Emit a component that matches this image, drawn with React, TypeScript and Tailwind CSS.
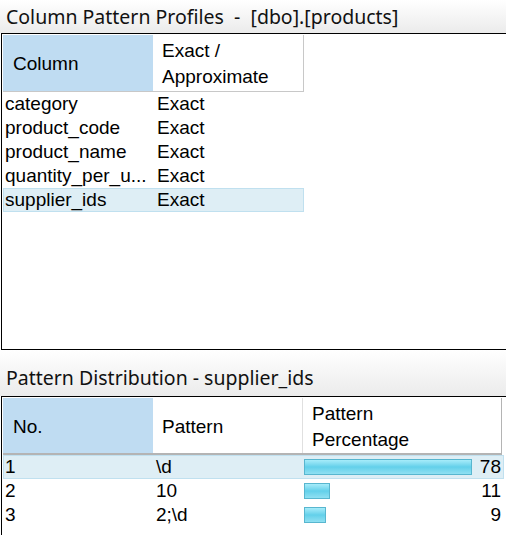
import React from "react";

const sans = { fontFamily: '"Liberation Sans", Arial, sans-serif' };

function TitleBar({ text, h }: { text: string; h: string }) {
  return (
    <div
      className={`${h} flex items-end pl-[6px] bg-gradient-to-b from-white to-[#ebebeb] text-[19.5px] leading-[26px] text-[#111] whitespace-pre`}
      style={{ fontFamily: '"Noto Sans", "Open Sans", sans-serif' }}
    >
      {text}
    </div>
  );
}

function Bar({ w }: { w: number }) {
  return (
    <div
      className="h-[16px] border border-[#58b6cf] bg-gradient-to-b from-[#a6ecfa] via-[#62d0ea] to-[#8fe0f2]"
      style={{ width: w }}
    />
  );
}

export default function App() {
  const rows1 = ["category", "product_code", "product_name", "quantity_per_u...", "supplier_ids"];
  const rows2 = [
    { n: "1", p: "\\d", w: 168, v: "78", sel: true },
    { n: "2", p: "10", w: 26, v: "11", sel: false },
    { n: "3", p: "2;\\d", w: 22, v: "9", sel: false },
  ];
  return (
    <div className="w-[506px] h-[535px] bg-white overflow-hidden flex flex-col text-[19px] text-black" style={sans}>
      <TitleBar text="Column Pattern Profiles  -  [dbo].[products]" h="h-[33px] pb-[3px]" />
      <div className="h-[317px] ml-[1px] border-t border-l border-b border-black bg-white pl-[1px] pt-[1px] flex flex-col">
        <div className="flex h-[57px] w-[301px] border-b border-r border-[#c8c8c8]">
          <div className="w-[150px] bg-[#bfdcf2] flex items-center pl-[10px] pt-[2px]">Column</div>
          <div className="flex-1 flex flex-col justify-center pl-[9px] pt-[2px] leading-[26px]">
            <span>Exact /</span>
            <span>Approximate</span>
          </div>
        </div>
        {rows1.map((r, i) => {
          const sel = i === 4;
          return (
            <div
              key={r}
              className={`flex h-[24px] w-[301px] items-center border leading-[22px] ${sel ? "bg-[#deeef5] border-[#c0e0ef]" : "border-transparent"}`}
            >
              <div className="w-[152px] pl-[1px] whitespace-nowrap overflow-hidden">{r}</div>
              <div className="pl-[1px]">Exact</div>
            </div>
          );
        })}
      </div>
      <TitleBar text="Pattern Distribution - supplier_ids" h="h-[46px] pb-[5px]" />
      <div className="flex-1 ml-[1px] border-t border-l border-black bg-white pl-[1px] pt-[1px] flex flex-col">
        <div className="flex h-[57px] w-[499px] border-b-2 border-r border-[#b4b4b4]">
          <div className="w-[150px] bg-[#bfdcf2] flex items-center pl-[10px] pt-[3px]">No.</div>
          <div className="w-[150px] flex items-center pl-[9px] pt-[3px] border-r border-[#e0e0e0]">Pattern</div>
          <div className="flex-1 flex flex-col justify-center pl-[9px] pt-[3px] leading-[26px]">
            <span>Pattern</span>
            <span>Percentage</span>
          </div>
        </div>
        {rows2.map((r) => (
          <div
            key={r.n}
            className={`flex h-[24px] w-[501px] items-center border leading-[22px] ${r.sel ? "bg-[#deeef5] border-[#c0e0ef]" : "border-transparent"}`}
          >
            <div className="w-[150px] pl-[1px]">{r.n}</div>
            <div className="w-[150px] pl-[2px]">{r.p}</div>
            <div className="flex-1 flex items-center justify-between pr-[2px]">
              <Bar w={r.w} />
              <span>{r.v}</span>
            </div>
          </div>
        ))}
      </div>
    </div>
  );
}
